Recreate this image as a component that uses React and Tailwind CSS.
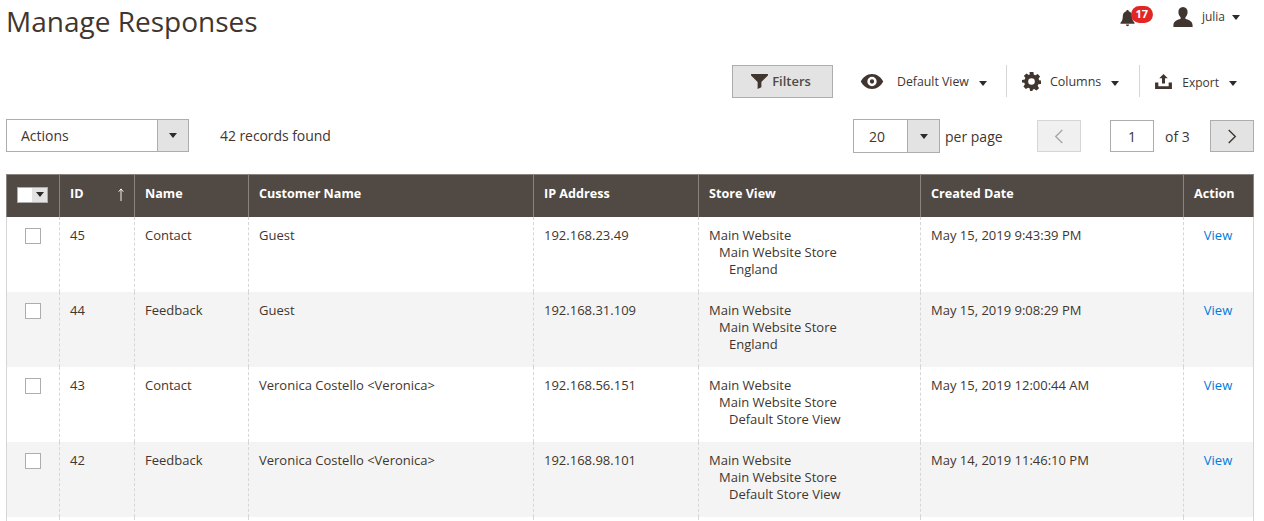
import React from 'react'

const rows = [
  { id: 45, name: 'Contact', customer: 'Guest', ip: '192.168.23.49', view: 'England', date: 'May 15, 2019 9:43:39 PM' },
  { id: 44, name: 'Feedback', customer: 'Guest', ip: '192.168.31.109', view: 'England', date: 'May 15, 2019 9:08:29 PM' },
  { id: 43, name: 'Contact', customer: 'Veronica Costello <Veronica>', ip: '192.168.56.151', view: 'Default Store View', date: 'May 15, 2019 12:00:44 AM' },
  { id: 42, name: 'Feedback', customer: 'Veronica Costello <Veronica>', ip: '192.168.98.101', view: 'Default Store View', date: 'May 14, 2019 11:46:10 PM' },
]

const Caret = ({ className = '' }) => (
  <span className={'inline-block w-0 h-0 border-x-[4px] border-x-transparent border-t-[5px] border-t-[#2f2a27] ' + className}></span>
)

const Th = ({ children, last }) => (
  <th className={'h-[43px] px-[10px] pb-[3px] text-left text-[12.6px] font-bold text-white border-t border-l border-[#8a837f] ' + (last ? 'border-r' : '')}>
    {children}
  </th>
)

const Td = ({ children, className = '' }) => (
  <td className={'align-top px-[10px] pt-[10px] border-l border-dashed border-[#d6d6d6] leading-[17px] ' + className}>{children}</td>
)

const SelectBox = ({ label, boxClass, arrowClass, labelClass }) => (
  <div className={'flex border border-[#adadad] bg-white ' + boxClass}>
    <div className={'flex-1 flex items-center ' + labelClass}>{label}</div>
    <div className={'flex items-center justify-center border-l border-[#adadad] bg-[#e3e3e3] ' + arrowClass}>
      <Caret />
    </div>
  </div>
)

export default function App() {
  return (
    <div className="h-[521px] w-[1264px] overflow-hidden bg-white font-['Open_Sans',sans-serif] text-[13px] text-[#41362f]">
      {/* title + user */}
      <div className="flex h-[65px] items-start justify-between pl-[6px] pr-[24px]">
        <h1 className="mt-[2px] text-[28px] leading-[38px] font-normal">Manage Responses</h1>
        <div className="mt-[5px] flex items-center">
          <div className="relative mr-[20px] h-[24px] w-[33px]">
            <svg viewBox="0 0 16 18" className="absolute left-0 top-[5px] h-[17px] w-[15px]" fill="#41362f">
              <path d="M8 0c-.8 0-1.300.5-1.300 1.200C4.400 1.800 3 3.700 3 6.200c0 3.300-.7 5.300-2.500 7.300v1h15v-1C13.700 11.500 13 9.500 13 6.200c0-2.500-1.400-4.400-3.700-5C9.300.5 8.800 0 8 0zM6.300 15.500a1.700 1.700 0 0 0 3.400 0z" />
            </svg>
            <span className="absolute left-[11px] top-[1px] flex h-[17px] w-[22px] items-center justify-center rounded-full bg-[#e22626] text-[11px] font-bold text-white">17</span>
          </div>
          <svg viewBox="0 0 20 20" className="mr-[9px] h-[20px] w-[20px]" fill="#41362f">
            <path d="M10 0c-3 0-4.600 2.200-4.600 5 0 2.300.9 4.200 2.200 5.300v1.500C5 12.800.4 14 .4 18.400V20h19.200v-1.600c0-4.400-4.600-5.600-7.200-6.600v-1.500c1.300-1.100 2.200-3 2.200-5.300C14.600 2.200 13 0 10 0z" />
          </svg>
          <span className="mr-[7px] text-[12px]">julia</span>
          <Caret />
        </div>
      </div>

      {/* filter / view buttons */}
      <div className="flex h-[54px] items-start pl-[732px]">
        <button className="flex h-[33px] w-[101px] items-center justify-center gap-[4px] border border-[#adadad] bg-[#e3e3e3] pr-[3px] text-[13px] font-semibold text-[#514943]">
          <svg viewBox="0 0 18 16" className="h-[15px] w-[17px]" fill="#41362f"><path d="M0 0h18v1.500L11 8.500V14l-4 2V8.500L0 1.500z" /></svg>
          Filters
        </button>
        <div className="ml-[27px] flex h-[33px] items-center">
          <svg viewBox="0 0 24 16" className="mr-[13px] h-[15px] w-[24px]" fill="#41362f">
            <path fillRule="evenodd" d="M12 0C6.500 0 2.500 3.500 0 8c2.500 4.500 6.500 8 12 8s9.500-3.500 12-8c-2.500-4.500-6.500-8-12-8zm0 3a5 5 0 1 1 0 10 5 5 0 0 1 0-10zm0 2.700a2.300 2.300 0 1 0 0 4.600 2.300 2.300 0 0 0 0-4.600z" />
          </svg>
          <span className="mr-[10px] mt-[2px] text-[12.3px]">Default View</span>
          <Caret className="mt-[3px]" />
        </div>
        <div className="ml-[19px] h-[32px] border-l border-[#d6d6d6]"></div>
        <div className="ml-[15px] flex h-[33px] items-center">
          <svg viewBox="0 0 20 20" className="mr-[9px] h-[19px] w-[19px]" fill="#41362f">
            <path fillRule="evenodd" d="M8 0h4l.5 2.800 1.600.7L16.500 2 19 4.800l-1.600 2.300.7 1.600L20 9v3.500l-2.800.5-.7 1.600 1.500 2.400-2.800 2.500-2.300-1.600-1.600.7L11 20H8.500L8 17.200l-1.600-.7L4 18l-2.500-2.800 1.600-2.300-.7-1.600L0 11V8.500l2.800-.5.700-1.600L2 4l2.800-2.500 2.300 1.600 1-.4zM10 6.500a3.500 3.500 0 1 0 0 7 3.500 3.500 0 0 0 0-7z" />
          </svg>
          <span className="mr-[10px] mt-[1px] text-[12.5px]">Columns</span>
          <Caret className="mt-[3px]" />
        </div>
        <div className="ml-[20px] h-[32px] border-l border-[#d6d6d6]"></div>
        <div className="ml-[15px] flex h-[33px] items-center">
          <svg viewBox="0 0 18 16" className="mr-[10px] h-[15px] w-[17px]" fill="#41362f">
            <path d="M9 0l4.500 4.500H10.600V10H7.400V4.500H4.500zM0 9h3.500v4h11V9H18v7H0z" />
          </svg>
          <span className="mr-[10px] mt-[2px] text-[12px]">Export</span>
          <Caret className="mt-[3px]" />
        </div>
      </div>

      {/* actions + pager */}
      <div className="flex h-[55px] items-start pl-[6px]">
        <SelectBox label="Actions" boxClass="h-[33px] w-[183px]" arrowClass="w-[31px]" labelClass="pl-[14px] text-[14px]" />
        <div className="ml-[31px] flex h-[33px] w-[111px] items-center whitespace-nowrap text-[14px] tracking-[-0.005em]">42 records found</div>
        <div className="ml-[522px]">
          <SelectBox label="20" boxClass="h-[34px] w-[87px]" arrowClass="w-[32px]" labelClass="pl-[15px] text-[14px]" />
        </div>
        <div className="ml-[5px] flex h-[34px] w-[57px] items-center whitespace-nowrap text-[14px]">per page</div>
        <button className="ml-[35px] mt-[1px] flex h-[32px] w-[44px] items-center justify-center border border-[#d6d6d6] bg-[#f0f0f0]">
          <svg viewBox="0 0 10 16" className="h-[15px] w-[10px]" fill="none" stroke="#a8a8a8" strokeWidth="1.500"><path d="M8.500 1L1.500 8l7 7" /></svg>
        </button>
        <div className="ml-[29px] mt-[1px] flex h-[32px] w-[44px] items-center justify-center border border-[#adadad] text-[14px]">1</div>
        <div className="ml-[11px] flex h-[34px] w-[25px] items-center whitespace-nowrap text-[14px]">of 3</div>
        <button className="ml-[20px] mt-[1px] flex h-[32px] w-[44px] items-center justify-center border border-[#adadad] bg-[#e3e3e3]">
          <svg viewBox="0 0 10 16" className="h-[15px] w-[10px]" fill="none" stroke="#41362f" strokeWidth="1.500"><path d="M1.500 1l7 7-7 7" /></svg>
        </button>
      </div>

      {/* grid */}
      <div className="pl-[6px]">
        <table className="w-[1248px] table-fixed border-separate border-spacing-0">
          <colgroup>
            <col className="w-[53px]" />
            <col className="w-[75px]" />
            <col className="w-[114px]" />
            <col className="w-[285px]" />
            <col className="w-[165px]" />
            <col className="w-[222px]" />
            <col className="w-[263px]" />
            <col className="w-[71px]" />
          </colgroup>
          <thead>
            <tr className="bg-[#514943]">
              <th className="h-[43px] border-t border-l border-[#8a837f] pb-[3px] pl-[10px]">
                <div className="flex h-[16px] w-[31px] border border-[#adadad]">
                  <div className="flex-1 bg-white"></div>
                  <div className="flex w-[15px] items-center justify-center bg-[#e3e3e3]"><Caret /></div>
                </div>
              </th>
              <Th>
                <div className="flex items-center justify-between">
                  ID
                  <svg viewBox="0 0 8 14" className="mr-[-1px] h-[13px] w-[8px]" fill="none" stroke="#fff" strokeWidth="1"><path d="M4 14V1M1.500 4L4 1l2.500 3" /></svg>
                </div>
              </Th>
              <Th>Name</Th>
              <Th>Customer Name</Th>
              <Th>IP Address</Th>
              <Th>Store View</Th>
              <Th>Created Date</Th>
              <Th last>Action</Th>
            </tr>
          </thead>
          <tbody>
            {rows.map((row, i) => (
              <tr key={row.id} className={i % 2 ? 'h-[75px] bg-[#f4f4f4]' : 'h-[75px] bg-white'}>
                <td className="align-top border-l border-[#d6d6d6] pt-[11px]">
                  <div className="ml-[18px] h-[16px] w-[16px] border border-[#adadad] bg-white"></div>
                </td>
                <Td>{row.id}</Td>
                <Td>{row.name}</Td>
                <Td>{row.customer}</Td>
                <Td>{row.ip}</Td>
                <Td>
                  <div>Main Website</div>
                  <div className="pl-[10px]">Main Website Store</div>
                  <div className="pl-[20px]">{row.view}</div>
                </Td>
                <Td>{row.date}</Td>
                <td className="align-top border-l border-r border-[#d6d6d6] pt-[10px] pr-[1px] text-center leading-[17px] [border-left-style:dashed]"><a className="text-[#007bdb]">View</a></td>
              </tr>
            ))}
            <tr className="h-[75px] bg-white">
              <td className="border-l border-[#d6d6d6]"></td>
              <Td></Td><Td></Td><Td></Td><Td></Td><Td></Td><Td></Td>
              <td className="border-l border-r border-[#d6d6d6] [border-left-style:dashed]"></td>
            </tr>
          </tbody>
        </table>
      </div>
    </div>
  )
}
